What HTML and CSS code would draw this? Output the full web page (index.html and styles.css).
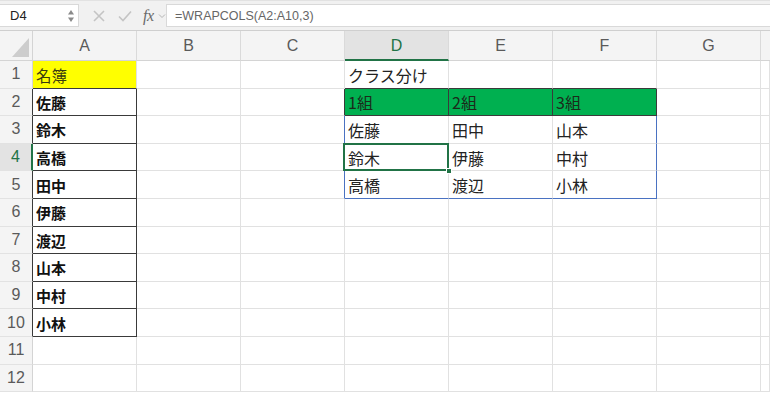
FILE: index.html
```html
<!DOCTYPE html>
<html lang="ja">
<head>
<meta charset="utf-8">
<title>WRAPCOLS</title>
<link rel="stylesheet" href="styles.css">
</head>
<body>
<div class="app">
  <div class="fbar">
    <div class="namebox">
      <span class="nb-text">D4</span>
      <svg class="spin" width="8" height="16" viewBox="0 0 8 16"><path d="M4 2 L7 6.5 L1 6.5 Z" fill="#8a8a8a"/><path d="M4 14 L7 9.5 L1 9.5 Z" fill="#8a8a8a"/></svg>
    </div>
    <div class="tools">
      <svg class="ico" width="14" height="14" viewBox="0 0 14 14"><path d="M2 2 L12 12 M12 2 L2 12" stroke="#c4c4c4" stroke-width="1.6" fill="none"/></svg>
      <svg class="ico" width="16" height="14" viewBox="0 0 16 14"><path d="M2 7.5 L6 11.5 L14 2.5" stroke="#c4c4c4" stroke-width="1.6" fill="none"/></svg>
      <span class="fx">fx</span>
      <svg class="chev" width="8" height="6" viewBox="0 0 8 6"><path d="M1 1.5 L4 4.5 L7 1.5" stroke="#b5b5b5" stroke-width="1" fill="none"/></svg>
    </div>
    <div class="formula">=WRAPCOLS(A2:A10,3)</div>
  </div>

  <div class="sheet">
    <div class="corner"><span class="tri"></span></div>
    <div class="ch">A</div>
    <div class="ch">B</div>
    <div class="ch">C</div>
    <div class="ch ch-sel">D</div>
    <div class="ch">E</div>
    <div class="ch">F</div>
    <div class="ch">G</div>
    <div class="ch ch-end"></div>

    <!-- row 1 -->
    <div class="rh">1</div>
    <div class="c a-col yellow bb-dark">名簿</div>
    <div class="c"></div>
    <div class="c"></div>
    <div class="c jp bb-dark">クラス分け</div>
    <div class="c bb-dark"></div>
    <div class="c bb-dark"></div>
    <div class="c"></div>
    <div class="c"></div>

    <!-- row 2 -->
    <div class="rh rh-dark">2</div>
    <div class="c a-col br-dark bb-dark">佐藤</div>
    <div class="c"></div>
    <div class="c br-dark"></div>
    <div class="c jp green br-dark bb-dark">1組</div>
    <div class="c jp green br-dark bb-dark">2組</div>
    <div class="c jp green br-dark bb-dark">3組</div>
    <div class="c"></div>
    <div class="c"></div>

    <!-- row 3 -->
    <div class="rh rh-dark">3</div>
    <div class="c a-col br-dark bb-dark">鈴木</div>
    <div class="c"></div>
    <div class="c br-blue"></div>
    <div class="c jp">佐藤</div>
    <div class="c jp">田中</div>
    <div class="c jp br-blue">山本</div>
    <div class="c"></div>
    <div class="c"></div>

    <!-- row 4 -->
    <div class="rh rh-sel">4</div>
    <div class="c a-col br-dark bb-dark">高橋</div>
    <div class="c"></div>
    <div class="c br-blue"></div>
    <div class="c jp sel">鈴木<span class="sel-box"></span><span class="handle"></span></div>
    <div class="c jp">伊藤</div>
    <div class="c jp br-blue">中村</div>
    <div class="c"></div>
    <div class="c"></div>

    <!-- row 5 -->
    <div class="rh rh-dark">5</div>
    <div class="c a-col br-dark bb-dark">田中</div>
    <div class="c"></div>
    <div class="c br-blue"></div>
    <div class="c jp bb-blue">高橋</div>
    <div class="c jp bb-blue">渡辺</div>
    <div class="c jp br-blue bb-blue">小林</div>
    <div class="c"></div>
    <div class="c"></div>

    <!-- row 6 -->
    <div class="rh rh-dark">6</div>
    <div class="c a-col br-dark bb-dark">伊藤</div>
    <div class="c"></div><div class="c"></div><div class="c"></div><div class="c"></div><div class="c"></div><div class="c"></div><div class="c"></div>

    <!-- row 7 -->
    <div class="rh rh-dark">7</div>
    <div class="c a-col br-dark bb-dark">渡辺</div>
    <div class="c"></div><div class="c"></div><div class="c"></div><div class="c"></div><div class="c"></div><div class="c"></div><div class="c"></div>

    <!-- row 8 -->
    <div class="rh rh-dark">8</div>
    <div class="c a-col br-dark bb-dark">山本</div>
    <div class="c"></div><div class="c"></div><div class="c"></div><div class="c"></div><div class="c"></div><div class="c"></div><div class="c"></div>

    <!-- row 9 -->
    <div class="rh rh-dark">9</div>
    <div class="c a-col br-dark bb-dark">中村</div>
    <div class="c"></div><div class="c"></div><div class="c"></div><div class="c"></div><div class="c"></div><div class="c"></div><div class="c"></div>

    <!-- row 10 -->
    <div class="rh rh-dark">10</div>
    <div class="c a-col br-dark bb-dark">小林</div>
    <div class="c"></div><div class="c"></div><div class="c"></div><div class="c"></div><div class="c"></div><div class="c"></div><div class="c"></div>

    <!-- row 11 -->
    <div class="rh">11</div>
    <div class="c"></div><div class="c"></div><div class="c"></div><div class="c"></div><div class="c"></div><div class="c"></div><div class="c"></div><div class="c"></div>

    <!-- row 12 -->
    <div class="rh">12</div>
    <div class="c"></div><div class="c"></div><div class="c"></div><div class="c"></div><div class="c"></div><div class="c"></div><div class="c"></div><div class="c"></div>
  </div>
</div>
</body>
</html>
```

FILE: styles.css
```css
* { box-sizing: border-box; }

html, body {
  margin: 0;
  padding: 0;
  background: #ffffff;
  overflow: hidden;
}

body {
  font-family: "Liberation Sans", "Noto Sans CJK JP", sans-serif;
  width: 770px;
  height: 393px;
}

.app {
  width: 770px;
  height: 393px;
  display: flex;
  flex-direction: column;
}

/* formula bar */
.fbar {
  height: 31px;
  flex: 0 0 31px;
  background: #f1f1f1;
  border-top: 1px solid #e2e2e2;
  border-bottom: 1px solid #cfcfcf;
  display: flex;
  align-items: flex-start;
  padding-top: 3px;
}

.namebox {
  width: 79px;
  height: 23px;
  background: #ffffff;
  border: 1px solid #d9d9d9;
  border-left: none;
  display: flex;
  align-items: center;
  justify-content: space-between;
  padding: 0 3px 0 10px;
}

.nb-text {
  font-size: 13px;
  color: #222;
}

.spin { display: block; }

.tools {
  width: 87px;
  height: 23px;
  display: flex;
  align-items: center;
  padding-left: 13px;
}

.tools .ico { display: block; margin-right: 11px; }
.tools .ico + .ico { margin-right: 10px; }

.fx {
  font-family: "Liberation Serif", serif;
  font-style: italic;
  font-size: 16px;
  color: #6a6a6a;
  margin-right: 4px;
  letter-spacing: -0.5px;
}

.chev { display: block; }

.formula {
  flex: 1;
  height: 23px;
  background: #ffffff;
  border: 1px solid #d9d9d9;
  border-right: none;
  font-size: 12.5px;
  color: #666;
  padding-left: 8px;
  display: flex;
  align-items: center;
}

/* sheet */
.sheet {
  flex: 1;
  display: grid;
  grid-template-columns: 33px repeat(7, 104px) 1fr;
  grid-template-rows: 30px repeat(12, 27.6px);
  background: #fff;
}

.corner {
  background: #f4f4f4;
  border-right: 1px solid #d4d4d4;
  border-bottom: 1px solid #d4d4d4;
  position: relative;
}

.tri {
  position: absolute;
  right: 3px;
  bottom: 3px;
  width: 0;
  height: 0;
  border-left: 17px solid transparent;
  border-bottom: 19px solid #cdcdcd;
}

.ch {
  background: #f4f4f4;
  border-right: 1px solid #dadada;
  border-bottom: 1px solid #d4d4d4;
  display: flex;
  align-items: center;
  justify-content: center;
  font-size: 16px;
  color: #5a5a5a;
  padding-top: 1px;
}

.ch-end { border-right: none; }

.ch-sel {
  background: #e3e3e3;
  color: #217346;
  border-bottom: 2px solid #217346;
}

.rh {
  background: #f4f4f4;
  border-right: 1px solid #d4d4d4;
  border-bottom: 1px solid #e2e2e2;
  display: flex;
  align-items: center;
  justify-content: center;
  font-size: 16px;
  color: #5a5a5a;
}

.rh-dark { border-right-color: #3a3a3a; }

.rh-sel {
  background: #e3e3e3;
  color: #217346;
  border-right: 2px solid #217346;
}

.c {
  border-right: 1px solid #e1e1e1;
  border-bottom: 1px solid #e1e1e1;
  display: flex;
  align-items: center;
  padding-left: 3px;
  padding-top: 1px;
  font-family: "Noto Sans CJK JP", sans-serif;
  font-size: 15.5px;
  color: #1a1a1a;
  white-space: nowrap;
  overflow: visible;
}

.a-col {
  font-weight: 700;
  font-size: 15px;
  color: #111;
}

.yellow {
  background: #ffff00;
  font-weight: 400;
  color: #3a3a10;
  font-size: 15.5px;
}

.jp { font-size: 16px; color: #222; }

.green { background: #00b050; color: #1b2a1b; }

.bb-dark { border-bottom-color: #3a3a3a; }
.br-dark { border-right-color: #3a3a3a; }
.br-blue { border-right-color: #4a72c2; }
.bb-blue { border-bottom-color: #4a72c2; }

.sel { position: relative; }

.sel-box {
  position: absolute;
  top: -1px;
  left: -2px;
  right: -1px;
  bottom: -1px;
  border: 2px solid #217346;
  pointer-events: none;
}

.handle {
  position: absolute;
  right: -4px;
  bottom: -4px;
  width: 6px;
  height: 6px;
  background: #217346;
  border: 1px solid #ffffff;
}
```
